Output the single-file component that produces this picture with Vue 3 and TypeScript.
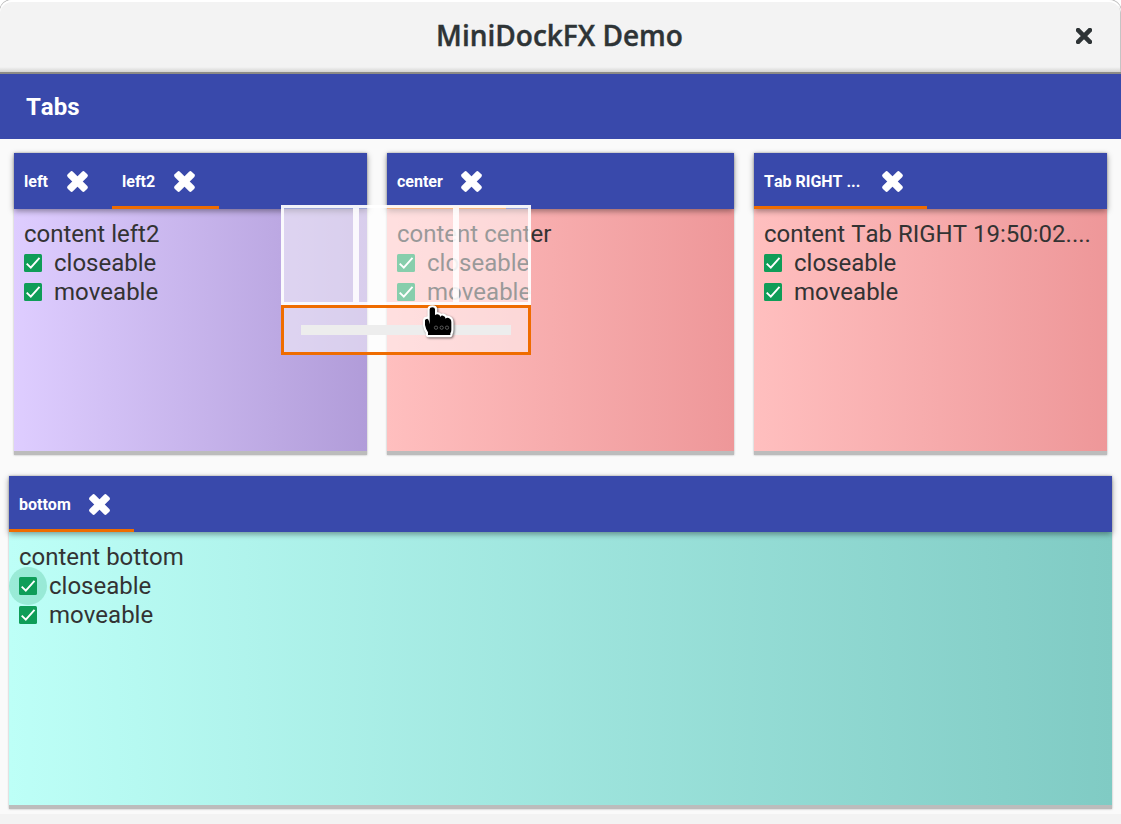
<script setup lang="ts">
interface Tab {
  label: string
  width: number
  active?: boolean
}
interface Dock {
  id: string
  content: string
  tabs: Tab[]
  ripple?: boolean
}

const topDocks: Dock[] = [
  { id: 'left', content: 'content left2', tabs: [{ label: 'left', width: 98 }, { label: 'left2', width: 107, active: true }] },
  { id: 'center', content: 'content center', tabs: [{ label: 'center', width: 119, active: true }] },
  { id: 'right', content: 'content Tab RIGHT 19:50:02....', tabs: [{ label: 'Tab RIGHT ...', width: 173, active: true }] },
]
const bottomDocks: Dock[] = [
  { id: 'bottom', content: 'content bottom', ripple: true, tabs: [{ label: 'bottom', width: 125, active: true }] },
]
const rows = [
  { name: 'upper', docks: topDocks },
  { name: 'lower', docks: bottomDocks },
]
const options = ['closeable', 'moveable']
</script>

<template>
  <div class="window">
    <header class="titlebar">
      <h1>MiniDockFX Demo</h1>
      <svg class="window-close" viewBox="0 0 16 16">
        <path d="M0.5 0.5L15.5 15.5M15.5 0.5L0.5 15.5" stroke="#2e3436" stroke-width="4.6" />
      </svg>
    </header>
    <nav class="menubar">Tabs</nav>
    <main>
      <div v-for="row in rows" :key="row.name" class="row" :class="row.name">
        <section v-for="dock in row.docks" :key="dock.id" class="dock" :class="dock.id">
          <div class="tabs">
            <div v-for="tab in dock.tabs" :key="tab.label" class="tab" :class="{ active: tab.active }" :style="{ width: tab.width + 'px' }">
              <span>{{ tab.label }}</span>
              <svg class="tab-close" viewBox="-11 -11 22 22">
                <g transform="translate(0.5 0.5)">
                  <rect x="-12" y="-3.7" width="24" height="7.4" rx="1.8" transform="rotate(45)" />
                  <rect x="-12" y="-3.7" width="24" height="7.4" rx="1.8" transform="rotate(-45)" />
                </g>
              </svg>
            </div>
          </div>
          <div class="content">
            <div class="line">{{ dock.content }}</div>
            <div v-for="(option, i) in options" :key="option" class="line option">
              <span class="box" :class="{ ripple: dock.ripple && i === 0 }">
                <svg viewBox="0 0 18 18">
                  <rect width="18" height="18" rx="1.5" fill="#0f9d58" />
                  <path d="M2.7 9.6L6.8 13.7L15.5 3.9" fill="none" stroke="#fff" stroke-width="1.9" />
                </svg>
              </span>
              <span>{{ option }}</span>
            </div>
          </div>
        </section>
      </div>
    </main>
    <div class="drop-guide">
      <div class="zones"><i /><i /><i /></div>
      <div class="target"><i /></div>
    </div>
    <svg class="pointer" viewBox="450 321 120 120">
      <path
        d="M479 343Q479 337 487 337Q495 337 495 343V361Q497 358 503 358Q510 359 511 366Q513 361 519 362Q526 364 527 371Q530 367 536 369Q544 372 544 382V405Q544 411 541 415V420H474V412Q467 401 465 390V376Q466 371 472 371Q476 373 477 379L479 388Z"
        fill="#000" stroke="#fff" stroke-width="13" stroke-linejoin="round" paint-order="stroke"
      />
      <g fill="none" stroke="#8c8c8c" stroke-width="1.8">
        <circle cx="498" cy="398" r="5" />
        <circle cx="515" cy="398" r="5" />
        <circle cx="531" cy="398" r="5" />
      </g>
    </svg>
  </div>
</template>

<style>
body {
  margin: 0;
  background: #fff;
}
</style>

<style scoped>
.window {
  position: relative;
  box-sizing: border-box;
  width: 1121px;
  height: 824px;
  overflow: hidden;
  display: flex;
  flex-direction: column;
  background: #f3f3f3;
  font-family: Roboto, sans-serif;
  font-kerning: none;
  color: #333;
}
.window::before {
  content: '';
  position: absolute;
  inset: 0 0 auto 0;
  height: 74px;
  background: #fff;
}
.titlebar {
  position: relative;
  box-sizing: border-box;
  height: 74px;
  flex: none;
  display: flex;
  align-items: center;
  justify-content: center;
  border-bottom: 2px solid #8d8c86;
  border-radius: 12px 12px 0 0;
  background: linear-gradient(#f3f3f3 67px, #d4d4d2 72px);
  box-shadow: inset 0 2px #fff, inset -1px 0 #c4c4c4, 0 0 0 1px #bbb;
}
h1 {
  margin: 0;
  padding: 0 2px 2px 0;
  font: 600 28px/40px "Open Sans", "Noto Sans", sans-serif;
  color: #2e3436;
  -webkit-text-stroke: 0.4px #2e3436;
}
.window-close {
  position: absolute;
  left: 1076px;
  top: 28px;
  width: 16px;
  height: 16px;
}
.menubar {
  position: relative;
  flex: none;
  height: 65px;
  box-sizing: border-box;
  padding-left: 26px;
  background: #3949ab;
  color: #fff;
  font-size: 24px;
  font-weight: 700;
  line-height: 66px;
}
main {
  flex: none;
  height: 675px;
  box-sizing: border-box;
  padding: 14px 9px 5px;
  display: flex;
  flex-direction: column;
  gap: 21px;
  background: #fafafa;
}
.row {
  display: grid;
}
.upper {
  grid-template-columns: 353px 347px 353px;
  gap: 20px;
  height: 302px;
  padding: 0 5px;
}
.lower {
  height: 333px;
}
.dock {
  display: flex;
  flex-direction: column;
  border-bottom: 4px solid #bcbcbc;
  box-shadow: 0 0 2px rgba(0, 0, 0, 0.3);
  min-width: 0;
}
.tabs {
  position: relative;
  z-index: 1;
  height: 56px;
  flex: none;
  display: flex;
  background: #3949ab;
  box-shadow: 0 2px 6px rgba(0, 0, 0, 0.4);
}
.tab {
  box-sizing: border-box;
  padding: 3px 24px 0 10px;
  display: flex;
  align-items: center;
  justify-content: space-between;
  border-bottom: 3px solid transparent;
  color: #fff;
  font-size: 16px;
  font-weight: 700;
  white-space: nowrap;
}
.tab.active {
  border-color: #ef6c00;
}
.tab-close {
  width: 22px;
  height: 22px;
  flex: none;
  fill: #fff;
  overflow: visible;
}
.content {
  flex: 1;
  padding: 10px;
  font-size: 24px;
}
.left .content {
  background: linear-gradient(90deg, #decdff, #b19cd9);
}
.center .content,
.right .content {
  background: linear-gradient(90deg, #ffbfbf, #ee9799);
}
.bottom .content {
  background: linear-gradient(90deg, #bdfff7, #80cbc4);
}
.line {
  height: 29px;
  line-height: 31px;
  white-space: nowrap;
}
.option {
  display: flex;
  align-items: center;
  gap: 12px;
}
.box {
  position: relative;
  width: 18px;
  height: 18px;
}
.box svg {
  position: relative;
  display: block;
}
.ripple::before {
  content: '';
  position: absolute;
  inset: -10px;
  border-radius: 50%;
  background: rgba(15, 157, 88, 0.2);
}
.option > span:last-child {
  height: 29px;
}
.drop-guide {
  position: absolute;
  z-index: 2;
  left: 281px;
  top: 205px;
  width: 250px;
  height: 150px;
}
.zones {
  display: grid;
  grid-template-columns: 75px 100px 75px;
  height: 100px;
}
.zones i {
  border: 3px solid rgba(255, 255, 255, 0.93);
  background: rgba(255, 255, 255, 0.5);
  background-clip: padding-box;
}
.target {
  box-sizing: border-box;
  height: 50px;
  padding: 17px;
  border: 3px solid #ef6c00;
  background: rgba(255, 255, 255, 0.5);
}
.target i {
  display: block;
  height: 10px;
  background: #ededed;
}
.pointer {
  position: absolute;
  z-index: 3;
  left: 420px;
  top: 302px;
  width: 40px;
  height: 40px;
  filter: drop-shadow(1px 1px 1px rgba(0, 0, 0, 0.55));
}
</style>
